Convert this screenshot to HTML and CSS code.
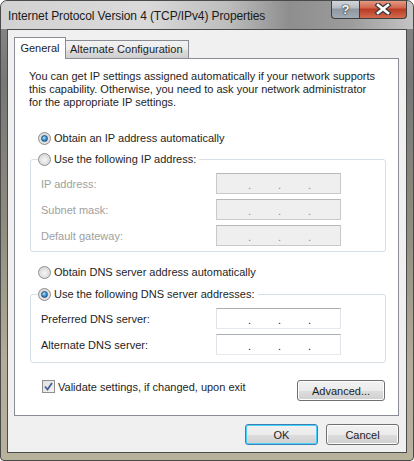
FILE: index.html
```html
<!DOCTYPE html>
<html lang="en">
<head>
  <meta charset="UTF-8">
  <title>Internet Protocol Version 4 (TCP/IPv4) Properties</title>
  <link rel="stylesheet" href="styles.css">
</head>
<body>
  <div class="window">
    <div class="titlebar">
      <span class="title">Internet Protocol Version 4 (TCP/IPv4) Properties</span>
      <div class="caption">
        <div class="cap help">?</div>
        <div class="cap close">
          <svg width="18" height="12" viewBox="0 0 18 12">
            <path d="M4 2 L14 10 M14 2 L4 10" stroke="#3c3c3c" stroke-width="5" stroke-linecap="square"/>
            <path d="M4 2 L14 10 M14 2 L4 10" stroke="#fff" stroke-width="2.6" stroke-linecap="square"/>
          </svg>
        </div>
      </div>
    </div>
    <div class="frame">
      <div class="client">
        <div class="tabs">
          <div class="tab active">General</div>
          <div class="tab">Alternate Configuration</div>
        </div>
        <div class="panel">
          <p class="intro">You can get IP settings assigned automatically if your network supports this capability. Otherwise, you need to ask your network administrator for the appropriate IP settings.</p>

          <div class="option first"><span class="radio on"></span>Obtain an IP address automatically</div>

          <div class="group ip-group">
            <div class="legend"><span class="radio"></span>Use the following IP address:</div>
            <div class="row disabled"><span class="label">IP address:</span><div class="ip"><i>.</i><i>.</i><i>.</i></div></div>
            <div class="row disabled"><span class="label">Subnet mask:</span><div class="ip"><i>.</i><i>.</i><i>.</i></div></div>
            <div class="row disabled"><span class="label">Default gateway:</span><div class="ip"><i>.</i><i>.</i><i>.</i></div></div>
          </div>

          <div class="option dns-auto"><span class="radio"></span>Obtain DNS server address automatically</div>

          <div class="group dns-group">
            <div class="legend"><span class="radio on"></span>Use the following DNS server addresses:</div>
            <div class="row"><span class="label">Preferred DNS server:</span><div class="ip"><i>.</i><i>.</i><i>.</i></div></div>
            <div class="row"><span class="label">Alternate DNS server:</span><div class="ip"><i>.</i><i>.</i><i>.</i></div></div>
          </div>

          <div class="footer">
            <div class="check-line">
              <span class="checkbox">
                <svg width="11" height="11" viewBox="0 0 11 11"><path d="M2 5.5 L4.5 8.5 L9 2" fill="none" stroke="#4d5f93" stroke-width="1.8"/></svg>
              </span>
              Validate settings, if changed, upon exit
            </div>
            <button class="btn advanced">Advanced...</button>
          </div>
        </div>
        <div class="dialog-buttons">
          <button class="btn default">OK</button>
          <button class="btn">Cancel</button>
        </div>
      </div>
    </div>
  </div>
</body>
</html>
```

FILE: styles.css
```css
body { margin: 0; background: #fff; font-family: "Liberation Sans", Arial, sans-serif; font-size: 11px; color: #1e1e1e; }

.window { width: 414px; height: 461px; border-radius: 7px 7px 4px 4px; overflow: hidden; box-sizing: border-box; border: 1px solid #4a4a4a;
  background: linear-gradient(to bottom, #8a8a8a 0, #777 80px, #8f8b7e 220px, #b3ac96 360px, #b8b19b 100%); display: flex; flex-direction: column; }

.titlebar { height: 28px; display: flex; justify-content: space-between; align-items: flex-start;
  background: linear-gradient(to right, #d2d2d2 0, #dadada 35%, #bdbdbd 55%, #8e8e8e 70%, #9c9c9c 85%, #c4c4c4 100%); }
.title { padding: 8px 0 0 7px; font-size: 12px; color: #1a1a1a; letter-spacing: -0.1px; }
.caption { display: flex; margin-right: 6px; margin-top: -1px; }
.cap { height: 19px; box-sizing: border-box; border: 1px solid #3e3e3e; border-top: none; display: flex; align-items: center; justify-content: center; }
.help { width: 28px; border-right: none; border-radius: 0 0 0 4px; color: #fff; font-weight: bold; font-size: 13px; text-shadow: 0 0 2px #222, 0 0 1px #000;
  background: linear-gradient(to bottom, #d6dade 0, #b5bcc3 45%, #8e979f 50%, #a3acb4 100%); }
.close { width: 48px; border-radius: 0 0 4px 0;
  background: linear-gradient(to bottom, #e6a08c 0, #d0644a 45%, #b83a22 50%, #d46a4e 100%); }

.frame { flex: 1; padding: 0 6px 7px 6px; display: flex; }
.client { flex: 1; border: 1px solid #4b4b4b; background: #f0f0f0; }

.tabs { display: flex; align-items: flex-end; height: 21px; margin: 7px 0 0 6px; }
.tab { height: 18px; box-sizing: border-box; padding: 2px 5px 0 4px; border: 1px solid #898c95; border-bottom: none; border-left: none;
  background: linear-gradient(to bottom, #f2f2f2 0, #ebebeb 50%, #dddddd 51%, #cfcfcf 100%); }
.tab.active { height: 22px; margin-bottom: -1px; width: 52px; padding: 4px 0 0 0; text-align: center; border-left: 1px solid #898c95; background: #fff; position: relative; z-index: 1; }

.panel { margin-left: 6px; width: 385px; height: 358px; box-sizing: border-box; border: 1px solid #898c95; background: #fff; padding-top: 11px; }
.intro { margin: 0 0 0 14px; line-height: 13px; width: 350px; }

.option { display: flex; align-items: center; height: 20px; margin-left: 23px; }
.option.first { margin-top: 19px; }
.option.dns-auto { margin-top: 10px; }
.radio { width: 13px; height: 13px; box-sizing: border-box; border-radius: 50%; border: 1px solid #8f8f8f; margin-right: 3px; flex: none;
  background: radial-gradient(circle at 50% 55%, #f6f6f6 0, #e3e3e3 45%, #cfcfcf 100%); display: flex; align-items: center; justify-content: center; }
.radio.on::after { content: ""; width: 5px; height: 5px; border-radius: 50%; border: 1px solid #1f4f7d;
  background: radial-gradient(circle at 40% 35%, #b6e4fb 0, #3b93d0 50%, #1a5a95 100%); }

.group { margin-left: 15px; width: 356px; box-sizing: border-box; border: 1px solid #d5dfe5; border-radius: 3px; }
.ip-group { margin-top: 11px; padding-bottom: 5px; }
.dns-group { margin-top: 12px; padding-bottom: 7px; }
.legend { display: flex; width: fit-content; align-items: center; height: 20px; margin: -11px 0 0 7px; padding-right: 3px; background: #fff; }

.row { display: flex; align-items: center; height: 21px; margin-top: 5px; padding-left: 10px; }
.legend + .row { margin-top: 4px; }
.label { width: 175px; }
.disabled .label { color: #a0a0a0; }
.ip { width: 125px; height: 21px; box-sizing: border-box; border: 1px solid #e2e3ea; border-top-color: #abadb3; border-bottom-color: #e3e9ef; background: #fff;
  display: flex; align-items: flex-end; padding-left: 31px; }
.disabled .ip { background: #efefef; border-color: #c9c9c9; border-top-color: #b8b8b8; }
.ip i { font-style: normal; width: 30px; line-height: 15px; color: #222; }
.disabled .ip i { color: #7a8a9a; }

.footer { display: flex; justify-content: space-between; align-items: flex-start; margin: 17px 13px 0 27px; }
.check-line { display: flex; align-items: center; height: 13px; }
.checkbox { width: 13px; height: 13px; box-sizing: border-box; border: 1px solid #8e8f8f; margin-right: 3px;
  background: linear-gradient(135deg, #e0e0e0 0, #f4f4f4 100%); display: flex; align-items: center; justify-content: center; }

.btn { font-family: inherit; font-size: 11px; color: #1e1e1e; height: 21px; padding: 0; border: 1px solid #707070; border-radius: 3px;
  background: linear-gradient(to bottom, #f2f2f2 0, #ebebeb 50%, #dddddd 51%, #cfcfcf 100%); box-shadow: inset 0 0 0 1px #fcfcfc; }
.advanced { width: 88px; }
.dialog-buttons { display: flex; justify-content: flex-end; gap: 8px; margin: 8px 7px 0 0; }
.dialog-buttons .btn { width: 73px; }
.btn.default { border-color: #3c7fb1; box-shadow: inset 0 0 0 1px #48d0ff; }
```
